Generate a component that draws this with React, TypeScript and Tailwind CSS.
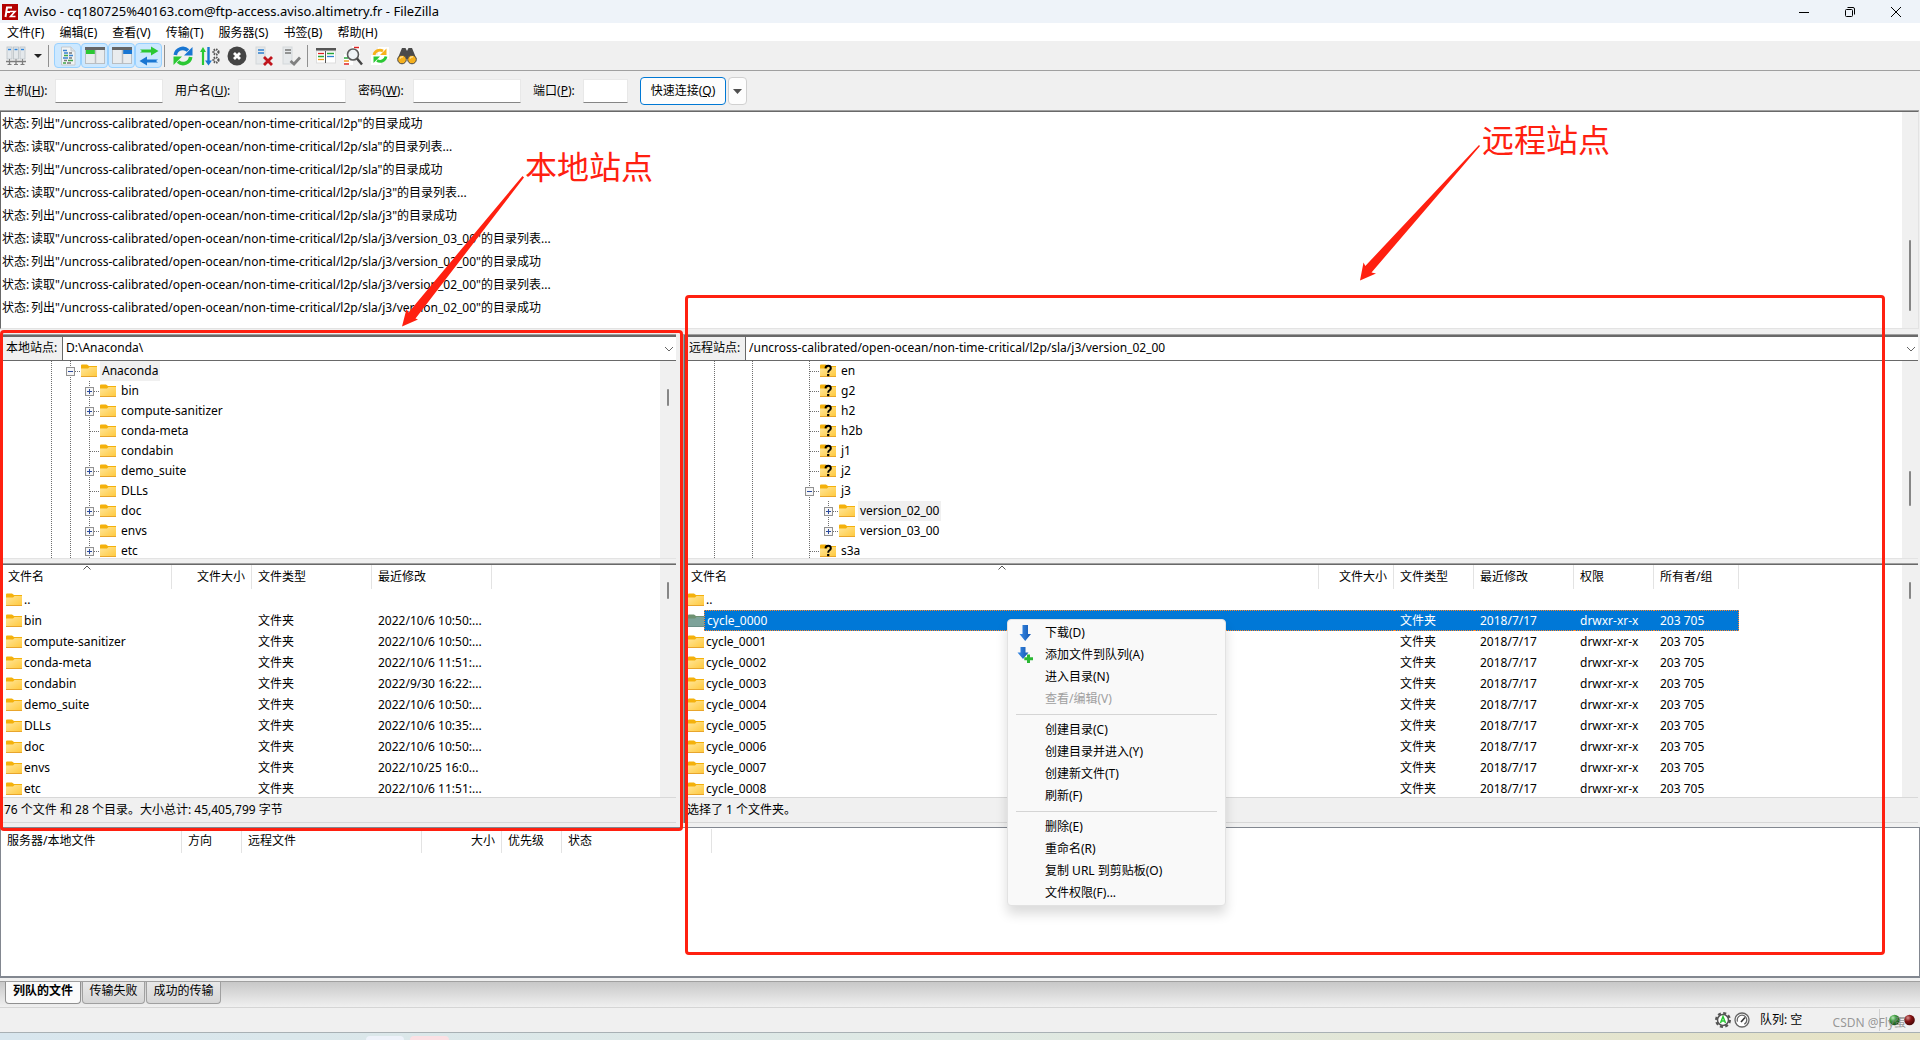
import type { ReactNode } from 'react';
import clsx from 'clsx';

type GuideKind = 'none' | 'line' | 'tee' | 'plus' | 'minus' | 'plusEnd';

interface TreeNode {
  guides: GuideKind[];
  name: string;
  unknown?: boolean;
  selected?: boolean;
}

interface Column {
  label: string;
  width: string;
  align?: 'right' | 'center';
  sorted?: boolean;
}

const menus = ['文件(F)', '编辑(E)', '查看(V)', '传输(T)', '服务器(S)', '书签(B)', '帮助(H)'];

const logLines = [
  '列出"/uncross-calibrated/open-ocean/non-time-critical/l2p"的目录成功',
  '读取"/uncross-calibrated/open-ocean/non-time-critical/l2p/sla"的目录列表...',
  '列出"/uncross-calibrated/open-ocean/non-time-critical/l2p/sla"的目录成功',
  '读取"/uncross-calibrated/open-ocean/non-time-critical/l2p/sla/j3"的目录列表...',
  '列出"/uncross-calibrated/open-ocean/non-time-critical/l2p/sla/j3"的目录成功',
  '读取"/uncross-calibrated/open-ocean/non-time-critical/l2p/sla/j3/version_03_00"的目录列表...',
  '列出"/uncross-calibrated/open-ocean/non-time-critical/l2p/sla/j3/version_03_00"的目录成功',
  '读取"/uncross-calibrated/open-ocean/non-time-critical/l2p/sla/j3/version_02_00"的目录列表...',
  '列出"/uncross-calibrated/open-ocean/non-time-critical/l2p/sla/j3/version_02_00"的目录成功'
];

const localTree: TreeNode[] = [
  { guides: ['line', 'minus'], name: 'Anaconda', selected: true },
  { guides: ['line', 'line', 'plus'], name: 'bin' },
  { guides: ['line', 'line', 'plus'], name: 'compute-sanitizer' },
  { guides: ['line', 'line', 'tee'], name: 'conda-meta' },
  { guides: ['line', 'line', 'tee'], name: 'condabin' },
  { guides: ['line', 'line', 'plus'], name: 'demo_suite' },
  { guides: ['line', 'line', 'tee'], name: 'DLLs' },
  { guides: ['line', 'line', 'plus'], name: 'doc' },
  { guides: ['line', 'line', 'plus'], name: 'envs' },
  { guides: ['line', 'line', 'plus'], name: 'etc' }
];

const remoteBase: GuideKind[] = ['line', 'none', 'line', 'none', 'none'];

const remoteTree: TreeNode[] = [
  ...['en', 'g2', 'h2', 'h2b', 'j1', 'j2'].map((name) => ({
    guides: [...remoteBase, 'tee' as GuideKind],
    name,
    unknown: true
  })),
  { guides: [...remoteBase, 'minus'], name: 'j3' },
  { guides: [...remoteBase, 'line', 'plus'], name: 'version_02_00', selected: true },
  { guides: [...remoteBase, 'line', 'plusEnd'], name: 'version_03_00' },
  { guides: [...remoteBase, 'tee'], name: 's3a', unknown: true }
];

const localColumns: Column[] = [
  { label: '文件名', width: 'w-[170px]', sorted: true },
  { label: '文件大小', width: 'w-[80px]', align: 'right' },
  { label: '文件类型', width: 'w-[120px]' },
  { label: '最近修改', width: 'w-[120px]' }
];

const remoteColumns: Column[] = [
  { label: '文件名', width: 'w-[634px]', sorted: true },
  { label: '文件大小', width: 'w-[75px]', align: 'right' },
  { label: '文件类型', width: 'w-[80px]' },
  { label: '最近修改', width: 'w-[100px]' },
  { label: '权限', width: 'w-[80px]' },
  { label: '所有者/组', width: 'w-[85px]' }
];

const queueColumns: Column[] = [
  { label: '服务器/本地文件', width: 'w-[181px]' },
  { label: '方向', width: 'w-[60px]', align: 'center' },
  { label: '远程文件', width: 'w-[180px]' },
  { label: '大小', width: 'w-[80px]', align: 'right' },
  { label: '优先级', width: 'w-[60px]' },
  { label: '状态', width: 'w-[150px]' }
];

const localFiles = [
  ['..', '', '', ''],
  ['bin', '', '文件夹', '2022/10/6 10:50:...'],
  ['compute-sanitizer', '', '文件夹', '2022/10/6 10:50:...'],
  ['conda-meta', '', '文件夹', '2022/10/6 11:51:...'],
  ['condabin', '', '文件夹', '2022/9/30 16:22:...'],
  ['demo_suite', '', '文件夹', '2022/10/6 10:50:...'],
  ['DLLs', '', '文件夹', '2022/10/6 10:35:...'],
  ['doc', '', '文件夹', '2022/10/6 10:50:...'],
  ['envs', '', '文件夹', '2022/10/25 16:0...'],
  ['etc', '', '文件夹', '2022/10/6 11:51:...']
];

const remoteFiles = [
  ['..', '', '', '', '', ''],
  ...[0, 1, 2, 3, 4, 5, 6, 7, 8].map((n) => [
    `cycle_000${n}`, '', '文件夹', '2018/7/17', 'drwxr-xr-x', '203 705'
  ])
];

// Shared gradients, referenced by id from the small icons
function IconDefs() {
  return (
    <svg className="absolute h-0 w-0" aria-hidden="true">
      <defs>
        <linearGradient id="folder" x1="0" y1="0" x2="1" y2="1">
          <stop offset="0" stopColor="#ffe69a" />
          <stop offset="1" stopColor="#ffc83a" />
        </linearGradient>
        <linearGradient id="arrow" x1="0" y1="0" x2="1" y2="0">
          <stop offset="0" stopColor="#3a8ce8" />
          <stop offset="1" stopColor="#1256b0" />
        </linearGradient>
        <radialGradient id="ledGreen" cx="0.35" cy="0.3" r="0.8">
          <stop offset="0" stopColor="#b8e8b8" />
          <stop offset="0.4" stopColor="#3c9a3c" />
          <stop offset="1" stopColor="#0c3c0c" />
        </radialGradient>
        <radialGradient id="ledRed" cx="0.35" cy="0.3" r="0.8">
          <stop offset="0" stopColor="#d89090" />
          <stop offset="0.4" stopColor="#861414" />
          <stop offset="1" stopColor="#3c0404" />
        </radialGradient>
      </defs>
    </svg>
  );
}

function FolderIcon({ unknown, selected }: { unknown?: boolean; selected?: boolean }) {
  return (
    <svg className="h-4 w-4 shrink-0" viewBox="0 0 16 16">
      <path d="M0 2.5Q0 1.5 1 1.5H6L8 3H16V7H0Z" fill={selected ? '#6f9272' : '#f4b10c'} />
      <path d="M0 5.5H7L8.5 4H16V14H0Z" fill={selected ? '#7da39a' : 'url(#folder)'} />
      <path d="M0 13.5H16" stroke={selected ? '#6b8f86' : '#e8a52c'} />
      {unknown && (
        <>
          <path d="M5.5 5.3Q5.7 2.8 8.2 2.8Q10.8 2.8 10.8 5.2Q10.8 6.6 9.3 7.5Q8.2 8.2 8.2 9.7" fill="none" stroke="#000" strokeWidth="2" />
          <rect x="7.1" y="11" width="2.2" height="2.2" fill="#000" />
        </>
      )}
    </svg>
  );
}

// One 19px indentation step of a tree row
function Guide({ kind }: { kind: GuideKind }) {
  if (kind === 'none') return <span className="w-[19px] shrink-0" />;
  const box = kind === 'plus' || kind === 'minus' || kind === 'plusEnd';
  return (
    <svg className="h-5 w-[19px] shrink-0" viewBox="0 0 19 20" shapeRendering="crispEdges">
      <path d={kind === 'plusEnd' ? 'M9.5 0V10' : 'M9.5 0V20'} stroke="#6e6e6e" strokeDasharray="1 1" />
      {kind !== 'line' && <path d="M10 10.5H19" stroke="#6e6e6e" strokeDasharray="1 1" />}
      {box && (
        <>
          <rect x="5.5" y="6.5" width="8" height="8" fill="#f6f6f6" stroke="#919191" />
          <path d="M7 10.5H12" stroke="#2b4a9c" />
          {kind !== 'minus' && <path d="M9.5 8V13" stroke="#2b4a9c" />}
        </>
      )}
    </svg>
  );
}

function Scrollbar({ thumb }: { thumb: string }) {
  return (
    <div className="flex w-4 shrink-0 justify-center bg-[#f0f0f0]">
      <div className={clsx('w-0.5 rounded-full bg-[#868686]', thumb)} />
    </div>
  );
}

function Tree({ nodes, indent, thumb }: { nodes: TreeNode[]; indent: string; thumb: string }) {
  return (
    <div className="flex h-[198px] overflow-hidden border-b border-[#e3e3e3] bg-white">
      <ul className={clsx('min-w-0 flex-1', indent)}>
        {nodes.map((node) => (
          <li key={node.name} className="flex h-5 items-center">
            {node.guides.map((kind, i) => (
              <Guide key={i} kind={kind} />
            ))}
            <span className="flex items-center pl-px">
              <FolderIcon unknown={node.unknown} />
              <span className={clsx('ml-[3px] px-0.5 leading-5', node.selected && 'bg-[#f0f0f0]')}>{node.name}</span>
            </span>
          </li>
        ))}
      </ul>
      <Scrollbar thumb={thumb} />
    </div>
  );
}

function TableHead({ columns }: { columns: Column[] }) {
  return (
    <thead>
      <tr className="h-6">
        {columns.map((col) => (
          <th
            key={col.label}
            scope="col"
            className={clsx(
              'relative border-r border-[#e3e3e3] px-1.5 text-left font-normal',
              col.width,
              col.align === 'right' && 'text-right',
              col.align === 'center' && 'text-center'
            )}
          >
            {col.label}
            {col.sorted && (
              <svg className="absolute top-0 left-1/2 -ml-1 h-1.5 w-2" viewBox="0 0 8 6">
                <path d="M0.5 4.5L4 1L7.5 4.5" fill="none" stroke="#555" />
              </svg>
            )}
          </th>
        ))}
      </tr>
    </thead>
  );
}

interface FileListProps {
  columns: Column[];
  rows: string[][];
  selected?: string;
  iconPad: string;
}

function FileList({ columns, rows, selected, iconPad }: FileListProps) {
  return (
    <div className="mt-1 border-t border-[#a0a0a0]">
      <div className="flex h-[233px] overflow-hidden border-t border-[#696969] bg-white">
        <div className="min-w-0 flex-1 overflow-hidden">
          <table className="table-fixed border-separate border-spacing-0 whitespace-nowrap">
            <TableHead columns={columns} />
            <tbody>
              {rows.map((row) => {
                const active = row[0] === selected;
                return (
                  <tr key={row[0]} className={clsx('h-[21px]', active && 'text-white')}>
                    <td className={clsx('p-0', iconPad)}>
                      <div className="flex h-[21px] items-center">
                        <FolderIcon selected={active} />
                        <span
                          className={clsx(
                            'h-full flex-1 pl-0.5',
                            active ? 'border-y border-l border-dotted border-[#ff8728] bg-[#0078d7] leading-[19px]' : 'leading-[21px]'
                          )}
                        >
                          {row[0]}
                        </span>
                      </div>
                    </td>
                    {row.slice(1).map((cell, i) => (
                      <td
                        key={i}
                        className={clsx(
                          'px-1.5 py-0',
                          active && 'border-y border-dotted border-[#ff8728] bg-[#0078d7] last:border-r'
                        )}
                      >
                        {cell}
                      </td>
                    ))}
                  </tr>
                );
              })}
            </tbody>
          </table>
        </div>
        <Scrollbar thumb="mt-[17px] h-[17px]" />
      </div>
    </div>
  );
}

interface SitePaneProps {
  id: string;
  label: string;
  path: string;
  status: string;
  children: ReactNode;
  className?: string;
}

function SitePane({ id, label, path, status, children, className }: SitePaneProps) {
  return (
    <section className={clsx('border-t border-l border-[#a0a0a0]', className)}>
      <div className="border-t-2 border-l border-[#696969]">
        <div className="flex h-6 border-b border-[#696969]">
          <label htmlFor={id} className="flex w-[61px] shrink-0 items-center border-r border-[#696969] bg-[#f0f0f0] pb-0.5 pl-1">
            {label}
          </label>
          <div className="relative flex-1">
            <select id={id} className="block h-full w-full appearance-none bg-white px-[3px] pb-0.5">
              <option>{path}</option>
            </select>
            <svg className="pointer-events-none absolute top-2 right-0.5 h-2 w-2.5" viewBox="0 0 10 8">
              <path d="M1 2L5 6L9 2" fill="none" stroke="#666" />
            </svg>
          </div>
        </div>
        {children}
        <div className="flex h-[26px] items-center border-y border-[#d8d8d8] pl-0.5">{status}</div>
      </div>
    </section>
  );
}

function ToolButton({ label, active, children }: { label: string; active?: boolean; children: ReactNode }) {
  return (
    <button
      type="button"
      aria-label={label}
      className={clsx(
        'flex h-[25px] w-[27px] items-center justify-center',
        active && 'rounded-sm border border-[#99d1ff] bg-[#cce8ff]'
      )}
    >
      <svg className="h-5 w-5" viewBox="0 0 20 20">
        {children}
      </svg>
    </button>
  );
}

function ToolSeparator({ className }: { className?: string }) {
  return <span className={clsx('h-[22px] w-px bg-[#909090]', className)} />;
}

function Toolbar() {
  return (
    <div className="flex h-[30px] items-center border-b border-[#a0a0a0] bg-[#f0f0f0] pl-0.5">
      <ToolButton label="站点管理器">
        {[1, 7.5, 14].map((x) => (
          <g key={x}>
            <rect x={x} y="1" width="5" height="12" fill="#e4e8eb" stroke="#b9c0c5" strokeWidth="0.8" />
            <path d={`M${x + 1} 3.5H${x + 4}`} stroke="#2f86dc" strokeWidth="1.4" />
            <path d={`M${x + 2.5} 13V16`} stroke="#888" />
          </g>
        ))}
        <path d="M0 15.5H20M3.5 15V19M10 15V19M16.5 15V19" stroke="#7c7c7c" strokeWidth="1.3" />
        <path d="M1.5 18.5H5.5M8 18.5H12M14.5 18.5H18.5" stroke="#7c7c7c" />
      </ToolButton>
      <button type="button" aria-label="打开站点列表" className="flex h-[25px] w-[17px] items-center justify-center">
        <svg className="h-1 w-2" viewBox="0 0 8 4">
          <path d="M0 0H8L4 4Z" fill="#222" />
        </svg>
      </button>
      <ToolSeparator className="mr-[5px] ml-0.5" />
      <ToolButton label="消息日志" active>
        <path d="M3.5 1H13L17 5V19H3.5Z" fill="#f1f3f4" stroke="#c3c9ce" />
        <path d="M13 1V5H17" fill="#dde2e6" stroke="#c3c9ce" />
        <path d="M5 4.5H9M6 7H10M11 9.5H15M5 12H10" stroke="#3b83cf" strokeWidth="1.3" />
        <path d="M6 9.5H10M10 14.5H15M5 17H8" stroke="#3fa64a" strokeWidth="1.3" />
        <path d="M11 7H14M11 12H14M6 14.5H9M9 17H13" stroke="#777" strokeWidth="1.3" />
      </ToolButton>
      <ToolButton label="本地目录树" active>
        <rect x="0.5" y="2.5" width="19" height="15" fill="#e9ecee" stroke="#b9bec2" />
        <rect x="0" y="1" width="20" height="3" fill="#656565" />
        <rect x="1" y="4" width="9" height="4" fill="#2bc834" />
        <path d="M10.5 4V17" stroke="#b9bec2" strokeWidth="1.5" />
      </ToolButton>
      <ToolButton label="远程目录树" active>
        <rect x="0.5" y="2.5" width="19" height="15" fill="#e9ecee" stroke="#b9bec2" />
        <rect x="0" y="1" width="20" height="3" fill="#656565" />
        <rect x="11" y="4" width="9" height="4" fill="#1976d2" />
        <path d="M10.5 4V17" stroke="#b9bec2" strokeWidth="1.5" />
      </ToolButton>
      <ToolButton label="传输队列" active>
        <path d="M1 3.5H12V0.5L19.5 5L12 9.5V6.5H1L3 5Z" fill="#2bc834" />
        <path d="M19 13.5H8V10.5L0.5 15L8 19.5V16.5H19L17 15Z" fill="#1976d2" />
      </ToolButton>
      <ToolSeparator className="mr-1 ml-0.5" />
      <ToolButton label="刷新">
        <path d="M2.3 9A7.6 7.6 0 0 1 15 4.5" fill="none" stroke="#1976d2" strokeWidth="3.6" />
        <path d="M19.5 1V9.5H11Z" fill="#1976d2" />
        <path d="M17.7 11A7.6 7.6 0 0 1 5 15.5" fill="none" stroke="#2bc834" strokeWidth="3.6" />
        <path d="M0.5 19V10.5H9Z" fill="#2bc834" />
      </ToolButton>
      <ToolButton label="处理队列">
        <path d="M3 19V5" stroke="#2bc834" strokeWidth="2.2" />
        <path d="M0 6L3 1L6 6Z" fill="#2bc834" />
        <path d="M8.500 1V16" stroke="#1976d2" strokeWidth="2.4" />
        <path d="M5 14.5L8.5 19.5L12 14.5Z" fill="#1976d2" />
        <circle cx="16" cy="6" r="2.5" fill="none" stroke="#555" strokeWidth="2.2" strokeDasharray="1.5 0.8" />
        <circle cx="16" cy="14" r="2.5" fill="none" stroke="#555" strokeWidth="2.2" strokeDasharray="1.5 0.8" />
      </ToolButton>
      <ToolButton label="取消">
        <circle cx="10" cy="10" r="9.5" fill="#444" />
        <path d="M7 7L13 13M13 7L7 13" stroke="#fff" strokeWidth="2.8" />
      </ToolButton>
      <ToolButton label="断开连接">
        <rect x="2" y="1" width="9" height="17" fill="#e6e9eb" stroke="#d3d7da" />
        <path d="M4 4H10M4 7H10" stroke="#2f80d0" strokeWidth="1.5" />
        <path d="M10 11L18 19M18 11L10 19" stroke="#c0141c" strokeWidth="2.8" />
      </ToolButton>
      <ToolButton label="重新连接">
        <rect x="2" y="1" width="9" height="17" fill="#e6e9eb" stroke="#d3d7da" />
        <path d="M4 4H10M4 7H10" stroke="#777" strokeWidth="1.5" />
        <path d="M9.5 15L13 18L19 11.5" fill="none" stroke="#808080" strokeWidth="2.8" />
      </ToolButton>
      <ToolSeparator className="mr-1 ml-[3px]" />
      <ToolButton label="过滤器">
        <rect x="0" y="2" width="20" height="3" fill="#555" />
        <rect x="0.5" y="5" width="19" height="12" fill="#fff" stroke="#ddd" />
        <path d="M2 7.5H8" stroke="#d22" strokeWidth="1.3" />
        <path d="M2 10.5H8M11 7.5H18" stroke="#29a63a" strokeWidth="1.3" />
        <path d="M2 13.5H8" stroke="#f09a1a" strokeWidth="1.3" />
        <path d="M11 10.5H18" stroke="#2b80d0" strokeWidth="1.3" />
        <path d="M9.5 5V17" stroke="#555" />
      </ToolButton>
      <ToolButton label="目录对比">
        <rect x="9" y="0" width="8" height="11" fill="#fff" />
        <rect x="1" y="8" width="9" height="11" fill="#fff" />
        <path d="M11 1.5H16" stroke="#d22" strokeWidth="1.5" />
        <path d="M1 12H5" stroke="#29a63a" strokeWidth="1.5" />
        <path d="M1 15H6" stroke="#f09a1a" strokeWidth="1.5" />
        <path d="M1 18H6" stroke="#d22" strokeWidth="1.5" />
        <circle cx="10" cy="8.5" r="5.5" fill="#e9f0f4" fillOpacity="0.7" stroke="#5a5a5a" strokeWidth="1.6" />
        <path d="M14 12.5L19 18.5" stroke="#444" strokeWidth="2.5" />
      </ToolButton>
      <ToolButton label="同步浏览">
        <rect x="8" y="1" width="11" height="12" fill="#fff" />
        <rect x="1" y="9" width="10" height="10" fill="#fff" />
        <path d="M4 9A6 6 0 0 1 13 5" fill="none" stroke="#f7b21b" strokeWidth="2.8" />
        <path d="M16.5 2.5V9H10Z" fill="#f7b21b" />
        <path d="M16 10.5A6 6 0 0 1 7 14.5" fill="none" stroke="#2bc834" strokeWidth="2.8" />
        <path d="M3.5 17V10.500H10Z" fill="#2bc834" />
      </ToolButton>
      <ToolButton label="搜索">
        <path d="M5 2H8.5L10 5L11.5 2H15L19.5 13H0.5Z" fill="#4a4a4a" />
        <circle cx="5" cy="13.5" r="4.3" fill="#f5b01d" stroke="#4a4a4a" />
        <circle cx="15" cy="13.5" r="4.3" fill="#f5b01d" stroke="#4a4a4a" />
        <path d="M3 12.5Q4 10.5 6 11M13 12.5Q14 10.5 16 11" fill="none" stroke="#ffe3a0" strokeWidth="1.3" />
      </ToolButton>
    </div>
  );
}

interface QuickFieldProps {
  id: string;
  text: string;
  hotkey: string;
  labelWidth: string;
  inputWidth: string;
  type?: string;
}

function QuickField({ id, text, hotkey, labelWidth, inputWidth, type = 'text' }: QuickFieldProps) {
  return (
    <div className="flex items-center">
      <label htmlFor={id} className={labelWidth}>
        {text}(<u>{hotkey}</u>):
      </label>
      <input id={id} type={type} className={clsx('h-6 border border-[#e8e8e8] border-b-[#868686] bg-white px-1 outline-none', inputWidth)} />
    </div>
  );
}

function QuickConnect() {
  return (
    <form className="mt-px flex h-[38px] items-center gap-3 bg-[#f0f0f0] pl-1">
      <QuickField id="host" text="主机" hotkey="H" labelWidth="w-[51px]" inputWidth="w-[108px]" />
      <QuickField id="user" text="用户名" hotkey="U" labelWidth="w-[63px]" inputWidth="w-[108px]" />
      <QuickField id="pass" text="密码" hotkey="W" labelWidth="w-[55px]" inputWidth="w-[108px]" type="password" />
      <QuickField id="port" text="端口" hotkey="P" labelWidth="w-[50px]" inputWidth="w-[45px]" />
      <div className="flex gap-0.5">
        <button type="button" className="h-7 w-[86px] rounded border border-[#0078d4] bg-[#fdfdfd]">
          快速连接(<u>Q</u>)
        </button>
        <button type="button" aria-label="历史连接" className="flex h-7 w-[19px] items-center justify-center rounded border border-[#d0d0d0] bg-[#fdfdfd]">
          <svg className="h-[5px] w-[9px]" viewBox="0 0 9 5">
            <path d="M0 0H9L4.5 5Z" fill="#505050" />
          </svg>
        </button>
      </div>
    </form>
  );
}

function MenuItem({ label, icon, disabled }: { label: string; icon?: ReactNode; disabled?: boolean }) {
  return (
    <button type="button" disabled={disabled} className="flex h-[22px] w-full items-center text-left disabled:text-[#a0a0a0]">
      <span className="flex w-[37px] shrink-0 justify-center pr-1">{icon}</span>
      {label}
    </button>
  );
}

function ContextMenu() {
  return (
    <div className="absolute top-[619px] left-[1007px] w-[219px] rounded border border-[#e2e2e2] bg-[#f9f9f9] pt-0.5 pb-px shadow-[0_8px_12px_rgba(0,0,0,0.14)]">
      <MenuItem
        label="下载(D)"
        icon={
          <svg className="h-4 w-4" viewBox="0 0 16 16">
            <path d="M5.5 0H11V9H14L8.2 16L2.5 9H5.5Z" fill="url(#arrow)" />
          </svg>
        }
      />
      <MenuItem
        label="添加文件到队列(A)"
        icon={
          <svg className="h-4 w-4" viewBox="0 0 16 16">
            <path d="M3.5 0H8.5V5.5H11.5L6 12L0.5 5.5H3.5Z" fill="url(#arrow)" />
            <path d="M11.5 7.5V16M7.3 11.7H16" stroke="#2bb834" strokeWidth="3" />
          </svg>
        }
      />
      <MenuItem label="进入目录(N)" />
      <MenuItem label="查看/编辑(V)" disabled />
      <hr className="mx-2 my-1 border-[#d5d5d5]" />
      <MenuItem label="创建目录(C)" />
      <MenuItem label="创建目录并进入(Y)" />
      <MenuItem label="创建新文件(T)" />
      <MenuItem label="刷新(F)" />
      <hr className="mx-2 my-1 border-[#d5d5d5]" />
      <MenuItem label="删除(E)" />
      <MenuItem label="重命名(R)" />
      <MenuItem label="复制 URL 到剪贴板(O)" />
      <MenuItem label="文件权限(F)..." />
    </div>
  );
}

// Red boxes, arrows and captions drawn over the window
function Annotations() {
  return (
    <div className="pointer-events-none absolute inset-0 text-[32px] leading-8 text-[#ff2010]">
      <div className="absolute top-[330px] left-0 h-[501px] w-[683px] rounded-sm border-3 border-[#ff2010]" />
      <div className="absolute top-[295px] right-[35px] left-[685px] h-[660px] rounded-sm border-3 border-[#ff2010]" />
      <svg className="absolute top-[176px] left-[402px] h-[151px] w-[122px]" viewBox="402 176 122 151">
        <path d="M522.5 176L524 177.5L415.5 318.5L418 319.5L402 326.5L406.5 309L408.5 312.5Z" fill="#ff2010" />
      </svg>
      <svg className="absolute top-[145px] left-[1360px] h-[136px] w-[120px]" viewBox="1360 145 120 136">
        <path d="M1479 145L1480 146L1371.5 272.5L1376 273.5L1360 280.5L1363.5 262.5L1365.3 266Z" fill="#ff2010" />
      </svg>
      <p className="absolute top-[151px] left-[525px]">本地站点</p>
      <p className="absolute top-[124px] left-[1482px]">远程站点</p>
    </div>
  );
}

export default function App() {
  return (
    <div className="relative flex min-h-screen flex-col overflow-hidden bg-[#f0f0f0] font-['Noto_Sans','Noto_Sans_CJK_SC',sans-serif] text-[12px] leading-4 text-black">
      <IconDefs />

      {/* Title bar */}
      <header className="flex h-[23px] items-center bg-[#eef3f9] pl-0.5">
        <svg className="h-4 w-4" viewBox="0 0 16 16">
          <rect width="16" height="16" fill="#b30000" />
          <path d="M3.5 13L5 3.5H10M4.3 8H8" fill="none" stroke="#fff" strokeWidth="2" />
          <path d="M8 7.5H13L8.5 12.5H13.5" fill="none" stroke="#fff" strokeWidth="1.6" />
        </svg>
        <h1 className="ml-1.5 pb-0.5 text-[13px]">Aviso - cq180725%40163.com@ftp-access.aviso.altimetry.fr - FileZilla</h1>
        <div className="ml-auto flex pr-px">
          <button type="button" aria-label="最小化" className="flex h-5 w-[46px] items-center justify-center">
            <svg className="h-2.5 w-2.5" viewBox="0 0 10 10">
              <path d="M0 5.5H10" stroke="#000" />
            </svg>
          </button>
          <button type="button" aria-label="还原" className="flex h-5 w-[46px] items-center justify-center">
            <svg className="h-2.5 w-2.5" viewBox="0 0 10 10">
              <rect x="0.5" y="2.5" width="7" height="7" rx="1" fill="none" stroke="#000" />
              <path d="M2.5 0.5H8Q9.5 0.5 9.5 2V7.5" fill="none" stroke="#000" />
            </svg>
          </button>
          <button type="button" aria-label="关闭" className="flex h-5 w-[46px] items-center justify-center">
            <svg className="h-2.5 w-2.5" viewBox="0 0 10 10">
              <path d="M0 0L10 10M10 0L0 10" stroke="#000" />
            </svg>
          </button>
        </div>
      </header>

      <nav className="flex h-[18px] items-center gap-px bg-white pt-0.5">
        {menus.map((menu) => (
          <button key={menu} type="button" className="px-[7px]">
            {menu}
          </button>
        ))}
      </nav>

      <Toolbar />
      <QuickConnect />

      {/* Message log */}
      <div className="mr-px flex h-[219px] border-t border-[#a0a0a0]">
        <div className="flex flex-1 border border-[#696969] border-r-[#e3e3e3] border-b-[#e3e3e3] bg-white">
          <ul className="flex-1 pl-px">
            {logLines.map((line) => (
              <li key={line} className="flex h-[23px] items-center">
                <span className="w-[29px]">状态:</span>
                <span>{line}</span>
              </li>
            ))}
          </ul>
          <Scrollbar thumb="mt-32 h-[71px]" />
        </div>
      </div>

      {/* Local and remote panes */}
      <div className="mt-[5px] flex">
        <SitePane id="local-path" label="本地站点:" path="D:\Anaconda\" status="76 个文件 和 28 个目录。大小总计: 45,405,799 字节" className="w-[676px] shrink-0">
          <Tree nodes={localTree} indent="pl-10" thumb="mt-7 h-[17px]" />
          <FileList columns={localColumns} rows={localFiles} iconPad="pl-1" />
        </SitePane>
        <SitePane
          id="remote-path"
          label="远程站点:"
          path="/uncross-calibrated/open-ocean/non-time-critical/l2p/sla/j3/version_02_00"
          status="选择了 1 个文件夹。"
          className="mr-0.5 ml-[7px] flex-1"
        >
          <Tree nodes={remoteTree} indent="pl-5" thumb="mt-[110px] h-[35px]" />
          <FileList columns={remoteColumns} rows={remoteFiles} selected="cycle_0000" iconPad="pl-[3px]" />
        </SitePane>
      </div>

      {/* Transfer queue */}
      <div className="mt-1 flex-1 border border-b-2 border-[#828790] bg-white pt-px">
        <table className="table-fixed border-separate border-spacing-0 whitespace-nowrap">
          <TableHead columns={queueColumns} />
        </table>
      </div>

      <div className="mt-[3px] flex h-[27px] items-start gap-px border-y border-t-[#a0a0a0] border-b-[#d5d5d5] bg-linear-to-b from-[#c8c8c8] to-[#f0f0f0] pl-[5px]">
        <button type="button" className="h-[22px] w-[76px] rounded-b-sm border border-t-0 border-[#909090] bg-[#fafafa] pb-1 font-bold">
          列队的文件
        </button>
        <button type="button" className="h-[22px] w-[63px] rounded-b-sm border border-t-0 border-[#a0a0a0] bg-linear-to-b from-[#e8e8e8] to-[#d6d6d6] pb-1">
          传输失败
        </button>
        <button type="button" className="h-[22px] w-[75px] rounded-b-sm border border-t-0 border-[#a0a0a0] bg-linear-to-b from-[#e8e8e8] to-[#d6d6d6] pb-1">
          成功的传输
        </button>
      </div>

      <footer className="relative flex h-[25px] items-center justify-end border-b border-[#a8b0b4] pr-[5px]">
        <svg className="h-4 w-4" viewBox="0 0 16 16">
          <circle cx="8" cy="8" r="6.8" fill="none" stroke="#555" strokeWidth="2.4" strokeDasharray="3 2.34" />
          <circle cx="8" cy="8" r="5.5" fill="#fff" stroke="#555" strokeWidth="1.5" />
          <path d="M5.5 11L8 4.5L10.5 11M6.3 9H9.7" fill="none" stroke="#2bc834" strokeWidth="1.5" />
        </svg>
        <svg className="ml-[3px] h-4 w-4" viewBox="0 0 16 16">
          <circle cx="8" cy="8" r="7" fill="#fff" stroke="#666" strokeWidth="1.3" />
          <circle cx="8" cy="8" r="4.8" fill="none" stroke="#666" strokeWidth="1.3" strokeDasharray="22 8" strokeDashoffset="-13" />
          <path d="M7 10L11 5.5" stroke="#333" strokeWidth="1.6" />
        </svg>
        <span className="ml-2.5 w-[119px]">队列: 空</span>
        <span className="h-[22px] w-px bg-[#d0d0d0]" />
        <svg className="ml-[9px] h-3 w-[26px]" viewBox="0 0 26 12">
          <circle cx="5.5" cy="6" r="5.3" fill="url(#ledGreen)" />
          <circle cx="20.5" cy="6" r="5.3" fill="url(#ledRed)" />
        </svg>
        <span className="absolute top-[7px] right-3.5 text-[#808080]/80">CSDN @Fly蛋</span>
      </footer>

      {/* Top edge of the taskbar */}
      <div className="flex h-[7px] items-end gap-1.5 bg-linear-to-r from-[#d8e6ee] via-[#dfe9e4] to-[#e6e2c4] pl-[366px]">
        <span className="h-1 w-[38px] rounded-t bg-[#eef2fa]" />
        <span className="h-1 w-[39px] rounded-t bg-[#fbe0e4]" />
      </div>

      <ContextMenu />
      <Annotations />
    </div>
  );
}
